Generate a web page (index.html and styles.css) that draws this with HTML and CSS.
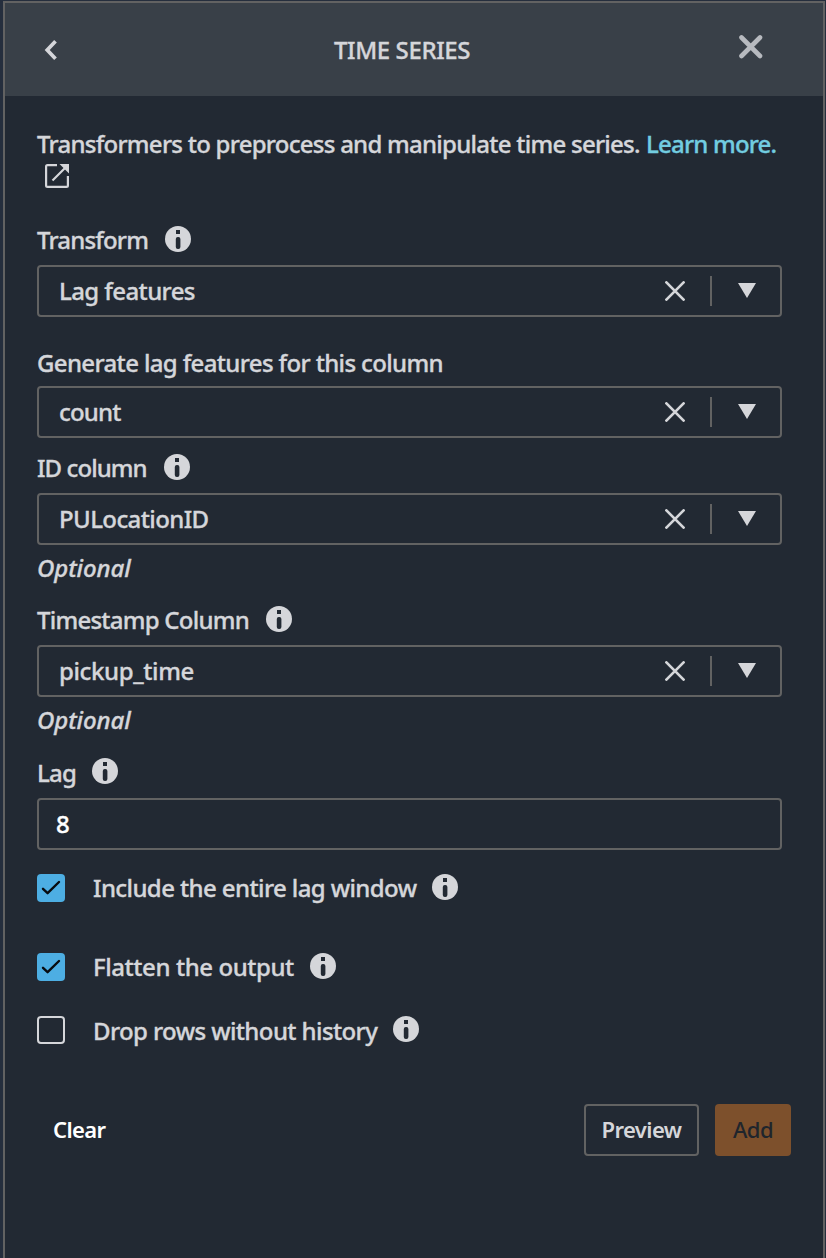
FILE: index.html
```
<!DOCTYPE html>
<html lang="en">
<head>
<meta charset="utf-8">
<title>Time series</title>
<link rel="stylesheet" href="styles.css">
</head>
<body>
<svg class="defs" width="0" height="0" aria-hidden="true">
  <symbol id="info" viewBox="0 0 26 26"><circle cx="13" cy="13" r="13" fill="#d5d6da"/><path d="M11 4h4v4h-4z" fill="#222933"/><rect x="10.8" y="11" width="4.6" height="12" rx="2" fill="#222933"/></symbol>
  <symbol id="clear" viewBox="0 0 20 20"><path d="M1.4 1.4l17.200 17.200M18.600 1.400L1.400 18.600" stroke="#d5d6da" stroke-width="2.7" stroke-linecap="round"/></symbol>
  <symbol id="caret" viewBox="0 0 18 15"><path d="M0 0h18L9 15z" fill="#d5d6da"/></symbol>
  <symbol id="check" viewBox="0 0 28 28"><path d="M6 14.8l4.600 4.400L22 8" fill="none" stroke="#080c10" stroke-width="2.4" stroke-linecap="round" stroke-linejoin="round"/></symbol>
</svg>
<div class="panel">
  <header class="header">
    <svg class="back" width="14" height="22" viewBox="0 0 14 22"><path d="M12.500 2.200L4.200 11l8.300 8.800" fill="none" stroke="#d5d6da" stroke-width="3.7"/></svg>
    <h1 class="title">TIME SERIES</h1>
    <svg class="close" width="24" height="24" viewBox="0 0 24 24"><path d="M2.500 2.500l18.500 18.500M21 2.500L2.500 21" stroke="#b7babf" stroke-width="4.600" stroke-linecap="round"/></svg>
  </header>
  <main class="body">
    <p class="intro"><span class="lead">Transformers to preprocess and manipulate time series.</span><a class="link">Learn more.</a></p>
    <svg class="external" width="24" height="24" viewBox="0 0 24 24"><path d="M12 1.100H2.500Q1.100 1.100 1.100 2.500v19q0 1.400 1.400 1.400h19q1.400 0 1.400-1.400V12M7.500 16.500L21 3" fill="none" stroke="#d5d6da" stroke-width="2.200"/><path d="M14.500 0H24v9.500z" fill="#d5d6da"/></svg>

    <section class="field transform">
      <div class="label"><span>Transform</span><svg class="info"><use href="#info"/></svg></div>
      <div class="select"><span class="value">Lag features</span><svg class="clear"><use href="#clear"/></svg><i class="rule"></i><svg class="caret"><use href="#caret"/></svg></div>
    </section>
    <section class="field source">
      <div class="label"><span>Generate lag features for this column</span></div>
      <div class="select"><span class="value">count</span><svg class="clear"><use href="#clear"/></svg><i class="rule"></i><svg class="caret"><use href="#caret"/></svg></div>
    </section>
    <section class="field id">
      <div class="label"><span>ID column</span><svg class="info"><use href="#info"/></svg></div>
      <div class="select"><span class="value">PULocationID</span><svg class="clear"><use href="#clear"/></svg><i class="rule"></i><svg class="caret"><use href="#caret"/></svg></div>
      <em class="hint">Optional</em>
    </section>
    <section class="field timestamp">
      <div class="label"><span>Timestamp Column</span><svg class="info"><use href="#info"/></svg></div>
      <div class="select"><span class="value">pickup_time</span><svg class="clear"><use href="#clear"/></svg><i class="rule"></i><svg class="caret"><use href="#caret"/></svg></div>
      <em class="hint">Optional</em>
    </section>
    <section class="field lag">
      <div class="label"><span>Lag</span><svg class="info"><use href="#info"/></svg></div>
      <div class="select input"><span class="value">8</span></div>
    </section>

    <div class="option include"><span class="box checked"><svg width="28" height="28"><use href="#check"/></svg></span><span class="option-text">Include the entire lag window</span><svg class="info"><use href="#info"/></svg></div>
    <div class="option flatten"><span class="box checked"><svg width="28" height="28"><use href="#check"/></svg></span><span class="option-text">Flatten the output</span><svg class="info"><use href="#info"/></svg></div>
    <div class="option drop"><span class="box"></span><span class="option-text">Drop rows without history</span><svg class="info"><use href="#info"/></svg></div>

    <footer class="actions">
      <span class="reset">Clear</span>
      <span class="button preview">Preview</span>
      <span class="button add">Add</span>
    </footer>
  </main>
</div>
</body>
</html>
```
FILE: styles.css
```
* { box-sizing: border-box; }
body {
  margin: 0;
  height: 1258px;
  padding: 1px 1px 0 3px;
  overflow: hidden;
  background: #252e3d;
  color: #d5d6da;
  font: 500 24px/32px "Noto Sans", "Open Sans", sans-serif;
  letter-spacing: -0.6px;
  white-space: nowrap;
  -webkit-text-stroke: 0.35px currentColor;
}
svg { display: block; flex: none; }
.defs { position: absolute; }
.panel {
  height: 1257px;
  border: 2px solid #626262;
  border-bottom: 0;
  background: #222933;
}
.header {
  display: flex;
  height: 93px;
  padding-left: 38px;
  background: #394048;
}
.back { margin-top: 36px; }
.title { width: 137px; margin: 31px 0 0 277px; font: inherit; letter-spacing: -0.4px; }
.close { margin: 32px 0 0 268px; }
.body { padding: 32px 32px 0; }
.intro { display: flex; height: 32px; margin: 0; }
.lead { width: 609px; letter-spacing: -0.74px; }
.link { color: #72cde0; letter-spacing: -0.8px; }
.external { margin: 4px 0 0 8px; }
.field { display: flex; flex-direction: column; }
.label { display: flex; align-items: center; gap: 17px; height: 32px; }
.info { width: 26px; height: 26px; margin-top: -2px; }
.select {
  display: flex;
  align-items: center;
  width: 745px;
  height: 52px;
  margin-top: 9px;
  padding: 0 24px 0 20px;
  border: 2px solid #626262;
  border-radius: 4px;
}
.value { flex: 1; }
.clear { width: 20px; height: 20px; }
.rule { width: 2px; height: 30px; margin: 0 26px 0 25px; background: #626262; }
.caret { width: 18px; height: 15px; margin-top: -2px; }
.hint { height: 32px; margin-top: 7px; letter-spacing: -0.1px; }
.transform { margin-top: 36px; }
.transform .label { letter-spacing: -0.83px; }
.source { margin-top: 30px; }
.source .label { letter-spacing: -0.64px; }
.source .select { margin-top: 7px; }
.source .value { letter-spacing: -0.8px; }
.id { margin-top: 14px; }
.id .label { letter-spacing: -0.92px; }
.timestamp { margin-top: 20px; }
.timestamp .label { letter-spacing: -0.76px; }
.timestamp .value { letter-spacing: -0.38px; }
.lag { margin-top: 21px; }
.lag .label { gap: 16px; letter-spacing: -0.8px; }
.lag .info { margin-top: -4px; }
.input { padding-left: 17px; color: #fff; }
.option { display: flex; align-items: center; height: 28px; }
.box { width: 28px; height: 28px; border: 2px solid #d5d6da; border-radius: 4px; }
.checked { border: 0; background: #4daee3; }
.option-text { margin: 0 16px 0 28px; }
.include { margin-top: 24px; }
.flatten { margin-top: 51px; letter-spacing: -0.43px; }
.drop { margin-top: 35px; }
.drop .option-text { padding-top: 2px; }
.actions { display: flex; align-items: center; height: 52px; margin-top: 60px; padding-left: 16px; font-weight: 600; font-size: 22px; -webkit-text-stroke: 0; }
.reset { width: 531px; padding-bottom: 2px; color: #fff; }
.button { height: 52px; border-radius: 4px; line-height: 50px; text-align: center; }
.preview { width: 115px; margin-right: 16px; border: 2px solid #626262; line-height: 46px; }
.add { width: 76px; background: #7d502c; color: #20252c; font-weight: 500; }
```
